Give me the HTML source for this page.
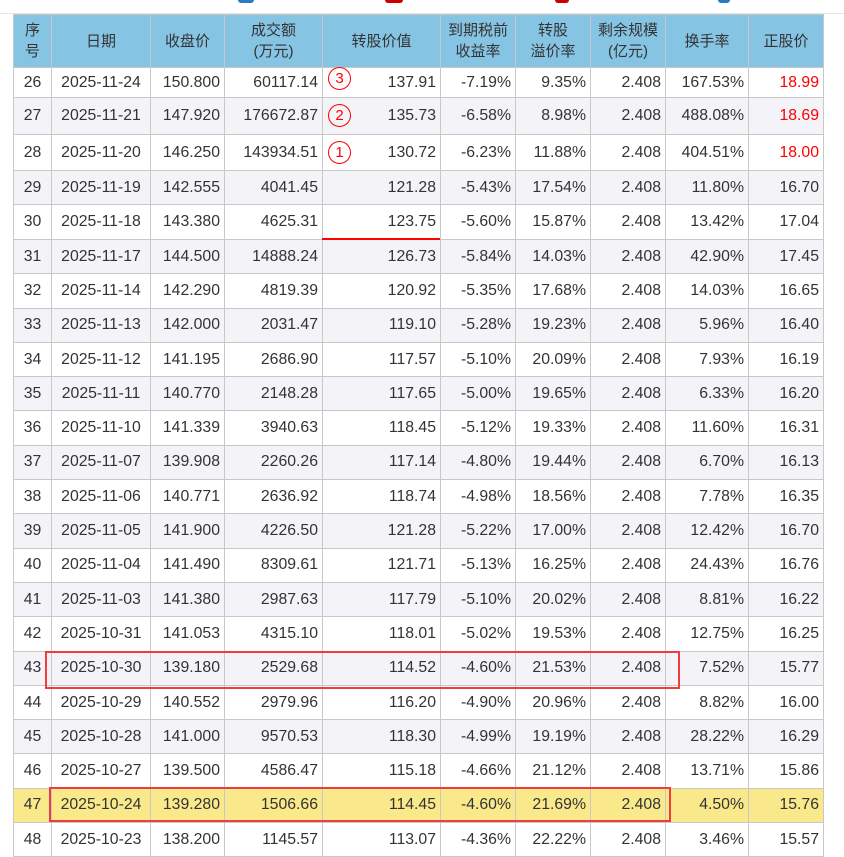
<!DOCTYPE html>
<html><head><meta charset="utf-8"><style>
body{margin:0;width:844px;height:838px;overflow:hidden;background:#fff;font-family:"Liberation Sans","Noto Sans CJK SC",sans-serif;position:relative}
.top{position:absolute;left:0;top:0;width:844px;height:13px;border-bottom:1px solid #e4e4e4;background:#fff}
table{position:absolute;left:13px;top:14px;border-collapse:collapse;table-layout:fixed;font-size:15.8px;color:#333}
td,th{border:1px solid #c8c8c8;padding:0 4px;text-align:right;white-space:nowrap;overflow:hidden}
th{background:#86c4e4;font-weight:normal;text-align:center;font-size:15px;line-height:21px;height:52px;color:#333;padding:0 1px}
td:first-child{text-align:center;padding:0}
td:nth-child(2){text-align:center;padding:0}
tr.g td{background:#f3f3f8}
tr.y td{background:#f9e98a}
.r{color:#f00}
.box{position:absolute;border:2px solid #f03c3c}
.c{position:absolute;width:21px;height:21px;border:1.5px solid #f00;border-radius:50%;color:#f00;font-size:15px;line-height:21px;text-align:center}
</style></head><body>
<div class="top">
<div style="position:absolute;left:718px;top:0;width:12px;height:3px;background:#2a7bc0;border-radius:0 0 6px 6px"></div>
<div style="position:absolute;left:555px;top:0;width:14px;height:3px;background:#c00;border-radius:0 0 6px 6px"></div>
<div style="position:absolute;left:238px;top:0;width:16px;height:3px;background:#2a7bc0;border-radius:0 0 6px 6px"></div>
<div style="position:absolute;left:385px;top:0;width:18px;height:3px;background:#c00;border-radius:0 0 6px 6px"></div>
</div>
<table>
<colgroup><col style="width:38px"><col style="width:99px"><col style="width:74px"><col style="width:98px"><col style="width:118px"><col style="width:75px"><col style="width:75px"><col style="width:75px"><col style="width:83px"><col style="width:75px"></colgroup>
<tr><th>序<br>号</th><th>日期</th><th>收盘价</th><th>成交额<br>(万元)</th><th>转股价值</th><th>到期税前<br>收益率</th><th>转股<br>溢价率</th><th>剩余规模<br>(亿元)</th><th>换手率</th><th>正股价</th></tr>
<tr style="height:30px"><td>26</td><td>2025-11-24</td><td>150.800</td><td>60117.14</td><td>137.91</td><td>-7.19%</td><td>9.35%</td><td>2.408</td><td>167.53%</td><td class="r">18.99</td></tr>
<tr class="g" style="height:37px"><td>27</td><td>2025-11-21</td><td>147.920</td><td>176672.87</td><td>135.73</td><td>-6.58%</td><td>8.98%</td><td>2.408</td><td>488.08%</td><td class="r">18.69</td></tr>
<tr style="height:36px"><td>28</td><td>2025-11-20</td><td>146.250</td><td>143934.51</td><td>130.72</td><td>-6.23%</td><td>11.88%</td><td>2.408</td><td>404.51%</td><td class="r">18.00</td></tr>
<tr class="g" style="height:34px"><td>29</td><td>2025-11-19</td><td>142.555</td><td>4041.45</td><td>121.28</td><td>-5.43%</td><td>17.54%</td><td>2.408</td><td>11.80%</td><td>16.70</td></tr>
<tr style="height:35px"><td>30</td><td>2025-11-18</td><td>143.380</td><td>4625.31</td><td>123.75</td><td>-5.60%</td><td>15.87%</td><td>2.408</td><td>13.42%</td><td>17.04</td></tr>
<tr class="g" style="height:34.3px"><td>31</td><td>2025-11-17</td><td>144.500</td><td>14888.24</td><td>126.73</td><td>-5.84%</td><td>14.03%</td><td>2.408</td><td>42.90%</td><td>17.45</td></tr>
<tr style="height:34.3px"><td>32</td><td>2025-11-14</td><td>142.290</td><td>4819.39</td><td>120.92</td><td>-5.35%</td><td>17.68%</td><td>2.408</td><td>14.03%</td><td>16.65</td></tr>
<tr class="g" style="height:34.3px"><td>33</td><td>2025-11-13</td><td>142.000</td><td>2031.47</td><td>119.10</td><td>-5.28%</td><td>19.23%</td><td>2.408</td><td>5.96%</td><td>16.40</td></tr>
<tr style="height:34.3px"><td>34</td><td>2025-11-12</td><td>141.195</td><td>2686.90</td><td>117.57</td><td>-5.10%</td><td>20.09%</td><td>2.408</td><td>7.93%</td><td>16.19</td></tr>
<tr class="g" style="height:34.3px"><td>35</td><td>2025-11-11</td><td>140.770</td><td>2148.28</td><td>117.65</td><td>-5.00%</td><td>19.65%</td><td>2.408</td><td>6.33%</td><td>16.20</td></tr>
<tr style="height:34.3px"><td>36</td><td>2025-11-10</td><td>141.339</td><td>3940.63</td><td>118.45</td><td>-5.12%</td><td>19.33%</td><td>2.408</td><td>11.60%</td><td>16.31</td></tr>
<tr class="g" style="height:34.3px"><td>37</td><td>2025-11-07</td><td>139.908</td><td>2260.26</td><td>117.14</td><td>-4.80%</td><td>19.44%</td><td>2.408</td><td>6.70%</td><td>16.13</td></tr>
<tr style="height:34.3px"><td>38</td><td>2025-11-06</td><td>140.771</td><td>2636.92</td><td>118.74</td><td>-4.98%</td><td>18.56%</td><td>2.408</td><td>7.78%</td><td>16.35</td></tr>
<tr class="g" style="height:34.3px"><td>39</td><td>2025-11-05</td><td>141.900</td><td>4226.50</td><td>121.28</td><td>-5.22%</td><td>17.00%</td><td>2.408</td><td>12.42%</td><td>16.70</td></tr>
<tr style="height:34.3px"><td>40</td><td>2025-11-04</td><td>141.490</td><td>8309.61</td><td>121.71</td><td>-5.13%</td><td>16.25%</td><td>2.408</td><td>24.43%</td><td>16.76</td></tr>
<tr class="g" style="height:34.3px"><td>41</td><td>2025-11-03</td><td>141.380</td><td>2987.63</td><td>117.79</td><td>-5.10%</td><td>20.02%</td><td>2.408</td><td>8.81%</td><td>16.22</td></tr>
<tr style="height:34.3px"><td>42</td><td>2025-10-31</td><td>141.053</td><td>4315.10</td><td>118.01</td><td>-5.02%</td><td>19.53%</td><td>2.408</td><td>12.75%</td><td>16.25</td></tr>
<tr class="g" style="height:34.3px"><td>43</td><td>2025-10-30</td><td>139.180</td><td>2529.68</td><td>114.52</td><td>-4.60%</td><td>21.53%</td><td>2.408</td><td>7.52%</td><td>15.77</td></tr>
<tr style="height:34.3px"><td>44</td><td>2025-10-29</td><td>140.552</td><td>2979.96</td><td>116.20</td><td>-4.90%</td><td>20.96%</td><td>2.408</td><td>8.82%</td><td>16.00</td></tr>
<tr class="g" style="height:34.3px"><td>45</td><td>2025-10-28</td><td>141.000</td><td>9570.53</td><td>118.30</td><td>-4.99%</td><td>19.19%</td><td>2.408</td><td>28.22%</td><td>16.29</td></tr>
<tr style="height:34.3px"><td>46</td><td>2025-10-27</td><td>139.500</td><td>4586.47</td><td>115.18</td><td>-4.66%</td><td>21.12%</td><td>2.408</td><td>13.71%</td><td>15.86</td></tr>
<tr class="y" style="height:34.3px"><td>47</td><td>2025-10-24</td><td>139.280</td><td>1506.66</td><td>114.45</td><td>-4.60%</td><td>21.69%</td><td>2.408</td><td>4.50%</td><td>15.76</td></tr>
<tr style="height:34.3px"><td>48</td><td>2025-10-23</td><td>138.200</td><td>1145.57</td><td>113.07</td><td>-4.36%</td><td>22.22%</td><td>2.408</td><td>3.46%</td><td>15.57</td></tr>
</table>
<div class="c" style="left:328px;top:67px">3</div>
<div class="c" style="left:328px;top:104px">2</div>
<div class="c" style="left:328px;top:141px">1</div>
<div style="position:absolute;left:322px;top:238px;width:118px;height:2px;background:#f00"></div>
<div class="box" style="left:45px;top:651px;width:631px;height:34px"></div>
<div class="box" style="left:49px;top:787px;width:618px;height:31px"></div>
</body></html>
